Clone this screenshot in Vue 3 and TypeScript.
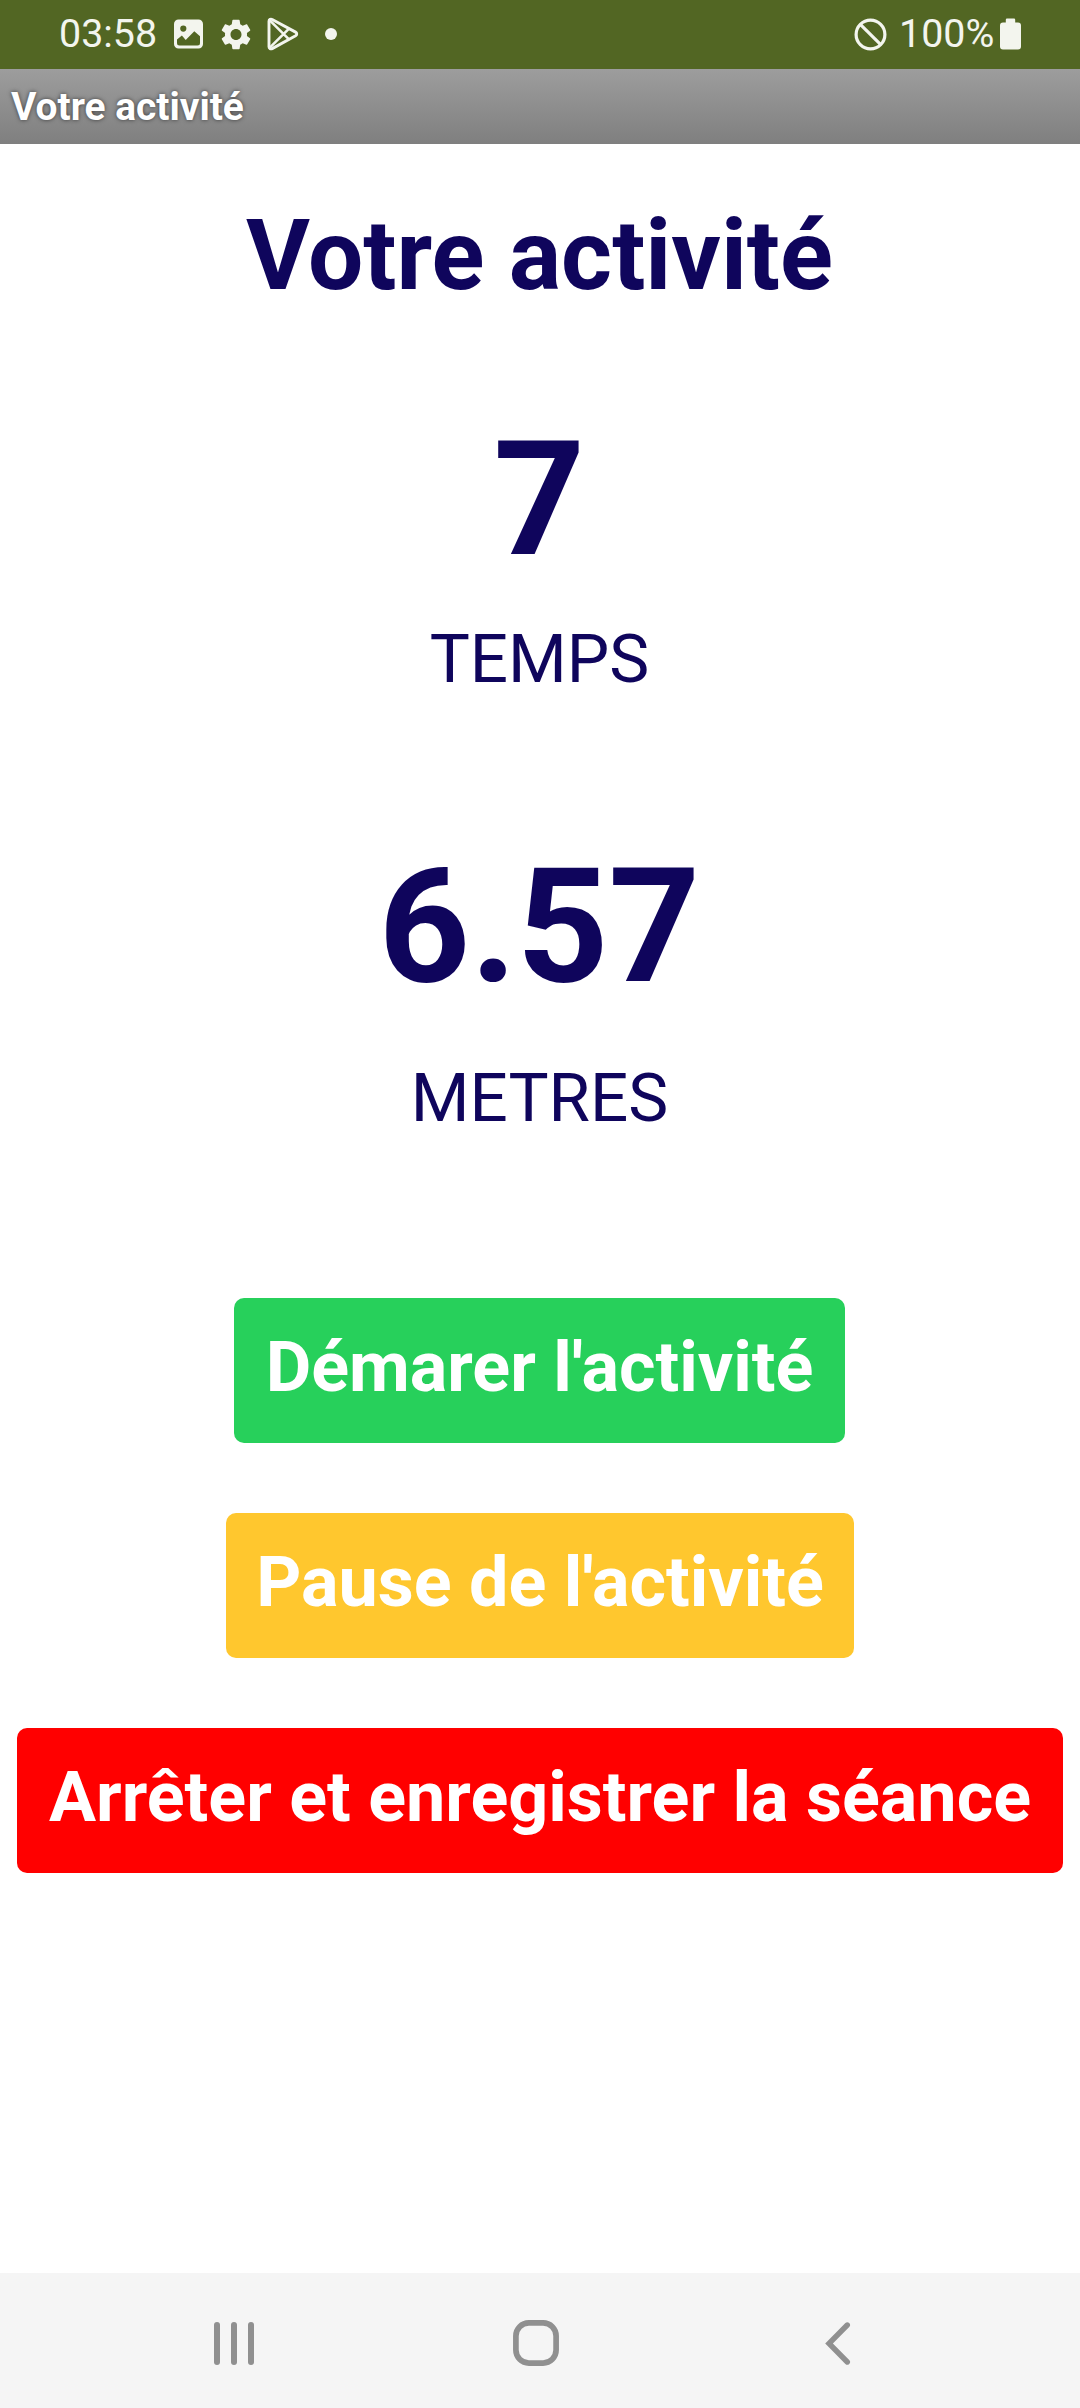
<script setup lang="ts">
interface Metric {
  value: string
  label: string
}

interface Action {
  label: string
  kind: string
}

const title: string = 'Votre activité'
const metrics: Metric[] = [
  { value: '7', label: 'TEMPS' },
  { value: '6.57', label: 'METRES' },
]
const actions: Action[] = [
  { label: "Démarer l'activité", kind: 'start' },
  { label: "Pause de l'activité", kind: 'pause' },
  { label: 'Arrêter et enregistrer la séance', kind: 'stop' },
]
</script>

<template>
  <div class="screen">
    <div class="status">
      <span class="clock">03:58</span>
      <svg class="ic-image" width="30" height="30" viewBox="0 0 30 30">
        <path
          fill="#f3f5ee"
          fill-rule="evenodd"
          d="M4.5 0.5h20a4.5 4.5 0 0 1 4.500 4.500v20a4.500 4.500 0 0 1-4.500 4.500h-20A4.500 4.500 0 0 1 0 25V5A4.500 4.500 0 0 1 4.500 0.500zM9.300 6.500a3.100 3.100 0 1 0 0 6.200a3.100 3.100 0 0 0 0-6.200zM3 20.600V24a2.500 2.500 0 0 0 2.500 2.500h18a2.500 2.500 0 0 0 2.500-2.500v-6.800L20.300 12.200l-8.600 8.700l-3.800-4.400z"
        />
      </svg>
      <svg class="ic-gear" width="30" height="31" viewBox="2.200 1.900 19.600 20.200">
        <path
          fill="#f3f5ee"
          d="M19.140 12.940c.04-.3.060-.61.060-.94 0-.32-.02-.64-.07-.94l2.030-1.580c.18-.14.23-.41.120-.61l-1.920-3.320c-.12-.22-.37-.29-.59-.22l-2.390.96c-.5-.38-1.030-.7-1.620-.94l-.36-2.540c-.04-.24-.24-.41-.48-.41h-3.840c-.24 0-.43.170-.47.410l-.36 2.540c-.59.240-1.130.57-1.620.94l-2.390-.96c-.22-.08-.47 0-.59.220L2.740 8.870c-.12.210-.08.470.120.610l2.030 1.580c-.05.3-.09.630-.09.940s.020.640.070.940l-2.030 1.580c-.18.140-.23.410-.12.610l1.920 3.320c.12.220.37.290.59.220l2.390-.96c.5.380 1.030.7 1.620.94l.36 2.540c.05.240.24.410.48.410h3.840c.24 0 .44-.17.470-.41l.36-2.540c.59-.24 1.130-.56 1.620-.94l2.390.96c.22.080.47 0 .59-.22l1.920-3.320c.12-.22.070-.47-.12-.61l-2.010-1.580zM12 15.600c-1.980 0-3.600-1.620-3.600-3.600s1.620-3.600 3.600-3.600 3.600 1.620 3.600 3.600-1.620 3.600-3.600 3.600z"
        />
      </svg>
      <svg class="ic-play" width="32" height="34" viewBox="0 0 32 34" fill="none" stroke="#f3f5ee">
        <path
          stroke-width="2.900"
          stroke-linejoin="round"
          d="M2 4.200v25.600c0 1.700 1.700 2.600 3.200 1.800L28.600 18.800c1.500-.9 1.500-2.900 0-3.700L5.200 2.400C3.700 1.600 2 2.500 2 4.200z"
        />
        <path stroke-width="2.600" d="M2.800 3.300L22 22.300M2.800 30.700L22 11.700" />
      </svg>
      <span class="dot"></span>
      <span class="spacer"></span>
      <svg class="ic-block" width="33" height="33" viewBox="0 0 33 33" fill="none" stroke="#f3f5ee" stroke-width="3.200">
        <circle cx="16.500" cy="16.500" r="14.400" />
        <path d="M6.300 6.300l20.400 20.400" />
      </svg>
      <span class="percent">100%</span>
      <svg class="ic-battery" width="21" height="32" viewBox="0 0 21 32" fill="#f3f5ee">
        <path d="M7 0.500h7a1.200 1.200 0 0 1 1.200 1.200V4.500H18a3 3 0 0 1 3 3V28.500a3 3 0 0 1-3 3H3a3 3 0 0 1-3-3V7.500a3 3 0 0 1 3-3h2.800V1.700A1.200 1.200 0 0 1 7 0.500z" />
      </svg>
    </div>

    <div class="titlebar">{{ title }}</div>

    <main class="content">
      <h1>{{ title }}</h1>
      <section v-for="m in metrics" :key="m.label" class="metric">
        <div class="value">{{ m.value }}</div>
        <div class="label">{{ m.label }}</div>
      </section>
      <div class="actions">
        <button v-for="a in actions" :key="a.kind" type="button" :class="a.kind">{{ a.label }}</button>
      </div>
    </main>

    <nav class="navbar">
      <svg class="nav-recent" width="40" height="43" viewBox="0 0 40 43" fill="#909090">
        <rect x="0" y="0" width="6" height="43" rx="3" />
        <rect x="17" y="0" width="6" height="43" rx="3" />
        <rect x="34" y="0" width="6" height="43" rx="3" />
      </svg>
      <svg class="nav-home" width="46" height="46" viewBox="0 0 46 46" fill="none" stroke="#909090" stroke-width="5.700">
        <rect x="2.900" y="2.900" width="40.200" height="40.200" rx="13" />
      </svg>
      <svg class="nav-back" width="26" height="43" viewBox="0 0 26 43" fill="none" stroke="#909090" stroke-width="5.400" stroke-linecap="round" stroke-linejoin="miter">
        <path d="M22.300 3L4 21.500L22.300 40" />
      </svg>
    </nav>
  </div>
</template>

<style>
body {
  background: #fff;
}
</style>

<style scoped>
.screen {
  width: 1080px;
  height: 2408px;
  display: flex;
  flex-direction: column;
  background: #fff;
  font-family: Roboto, 'Liberation Sans', sans-serif;
  overflow: hidden;
}

.status {
  flex: none;
  box-sizing: border-box;
  height: 69px;
  padding: 0 59px 1px 59px;
  display: flex;
  align-items: center;
  background: #526623;
  color: #f3f5ee;
  font-size: 39.4px;
  line-height: 48px;
}

.status svg {
  flex: none;
  display: block;
}

.clock {
  width: 115px;
}

.ic-image {
  margin-right: 17px;
}

.ic-gear {
  margin-right: 16px;
}

.ic-play {
  margin-right: 26px;
}

.dot {
  width: 12px;
  height: 12px;
  border-radius: 50%;
  background: #f3f5ee;
}

.spacer {
  flex: 1;
}

.ic-block {
  margin-right: 12px;
}

.percent {
  width: 101px;
}

.titlebar {
  flex: none;
  height: 75px;
  padding-left: 11px;
  background: linear-gradient(#9d9d9d, #7f7f7f);
  color: #fff;
  font-size: 38.9px;
  font-weight: 700;
  line-height: 76px;
  text-shadow: 0 0 4px rgba(0, 0, 0, 0.6);
}

.content {
  flex: 1;
  display: flex;
  flex-direction: column;
  align-items: center;
  color: #0f055c;
}

h1 {
  margin: 54px 0 92px;
  font-size: 98px;
  font-weight: 700;
  line-height: 116px;
  padding-right: 1px;
}

.metric {
  display: flex;
  flex-direction: column;
  align-items: center;
  gap: 25px;
  margin-bottom: 134px;
  padding-right: 1px;
}

.metric + .metric {
  gap: 37px;
  margin-bottom: 160px;
}

.value {
  font-size: 160px;
  font-weight: 700;
  line-height: 188px;
}

.label {
  font-size: 67.3px;
  line-height: 80px;
}

.actions {
  display: flex;
  flex-direction: column;
  align-items: center;
  gap: 70px;
}

button {
  box-sizing: border-box;
  height: 145px;
  padding: 28px 0 34px;
  border: 0;
  border-radius: 10px;
  color: #fff;
  font-family: inherit;
  font-size: 70.1px;
  font-weight: 700;
  line-height: 83px;
  white-space: nowrap;
}

.start {
  width: 611px;
  margin-right: 1px;
  background: #27d05b;
}

.pause {
  width: 628px;
  background: #ffc72e;
}

.stop {
  width: 1046px;
  background: #ff0000;
}

.navbar {
  flex: none;
  height: 135px;
  display: flex;
  align-items: center;
  padding: 5px 229px 0 214px;
  background: #f5f5f5;
  box-sizing: border-box;
}

.nav-home {
  margin-left: 259px;
  margin-right: 266px;
}
</style>
